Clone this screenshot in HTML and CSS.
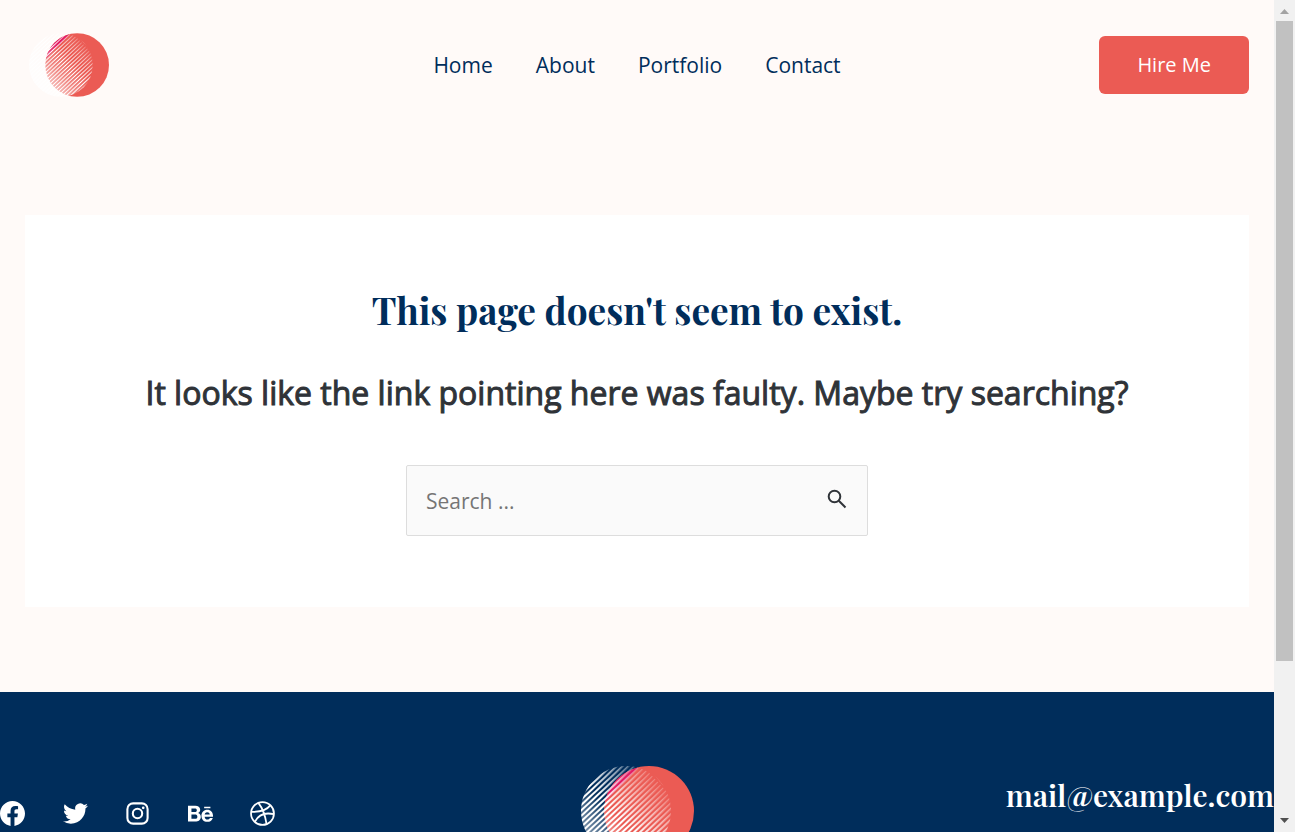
FILE: index.html
```html
<!DOCTYPE html>
<html lang="en">
<head>
<meta charset="utf-8">
<meta name="viewport" content="width=device-width, initial-scale=1">
<title>Page not found</title>
<link rel="stylesheet" href="styles.css">
</head>
<body class="window">
<svg class="defs" aria-hidden="true">
  <defs>
    <pattern id="stripes" width="90" height="4" patternUnits="userSpaceOnUse" patternTransform="rotate(-43 45 45)">
      <path d="M0 .5 L20 .7 L88 1.800 V2.100 L20 3.200 L0 3.500Z" fill="#fff"/>
    </pattern>
  </defs>
  <symbol id="logo" viewBox="0 0 113 90">
    <circle cx="68" cy="45" r="45" fill="#eb5b54"/>
    <path d="M57 1.500 A45 45 0 0 0 24 36 L32 27 L47 12Z" fill="#e31c63"/>
    <circle cx="45" cy="45" r="45" fill="url(#stripes)"/>
  </symbol>
</svg>
<div class="page">
  <header class="header">
    <a class="brand" href="#" aria-label="Home page"><svg class="brand-logo" aria-hidden="true"><use href="#logo"/></svg></a>
    <nav class="nav">
      <a href="#">Home</a>
      <a href="#">About</a>
      <a href="#">Portfolio</a>
      <a href="#">Contact</a>
    </nav>
    <button class="hire" type="button">Hire Me</button>
  </header>
  <main class="main">
    <section class="card">
      <h1 class="title">This page doesn't seem to exist.</h1>
      <p class="subtitle">It looks like the link pointing here was faulty. Maybe try searching?</p>
      <form class="search">
        <input class="search-input" type="search" aria-label="Search" placeholder="Search ...">
        <button class="search-button" type="button" aria-label="Submit search">
          <svg viewBox="0 0 20 20" aria-hidden="true"><circle cx="7.5" cy="7.5" r="5.8"/><path d="M11.8 11.8 L18.5 18.5"/></svg>
        </button>
      </form>
    </section>
  </main>
  <footer class="footer">
    <div class="social">
      <a href="#" aria-label="Facebook"><svg viewBox="0 0 24 24"><path d="M24 12.073C24 5.446 18.627.073 12 .073S0 5.446 0 12.073c0 5.99 4.388 10.954 10.125 11.854v-8.385H7.078v-3.47h3.047V9.43c0-3.007 1.792-4.669 4.533-4.669 1.312 0 2.686.235 2.686.235v2.953H15.83c-1.491 0-1.956.925-1.956 1.874v2.25h3.328l-.532 3.47h-2.796v8.385C19.612 23.027 24 18.062 24 12.073z"/></svg></a>
      <a href="#" aria-label="Twitter"><svg viewBox="0 0 24 24"><path d="M23.953 4.57a10 10 0 0 1-2.825.775 4.958 4.958 0 0 0 2.163-2.723c-.951.555-2.005.959-3.127 1.184a4.92 4.92 0 0 0-8.384 4.482C7.69 8.095 4.067 6.13 1.64 3.162a4.822 4.822 0 0 0-.666 2.475c0 1.71.87 3.213 2.188 4.096a4.904 4.904 0 0 1-2.228-.616v.06a4.923 4.923 0 0 0 3.946 4.827 4.996 4.996 0 0 1-2.212.085 4.936 4.936 0 0 0 4.604 3.417 9.867 9.867 0 0 1-6.102 2.105c-.39 0-.779-.023-1.17-.067a13.995 13.995 0 0 0 7.557 2.209c9.053 0 13.998-7.496 13.998-13.985 0-.21 0-.42-.015-.63A9.935 9.935 0 0 0 24 4.59z"/></svg></a>
      <a href="#" aria-label="Instagram"><svg viewBox="0 0 24 24"><g fill="none" stroke="#fff" stroke-width="2"><rect x="2.3" y="2.3" width="19.4" height="19.4" rx="5.5"/><circle cx="12" cy="12" r="4.5"/></g><circle cx="17.5" cy="6.5" r="1.3"/></svg></a>
      <a href="#" aria-label="Behance"><svg viewBox="0 0 24 24"><path fill-rule="evenodd" d="M0 4.500h7c2.700 0 4.700 1.100 4.700 3.900 0 1.600-.8 2.600-2.100 3.200 1.800.5 2.700 2 2.700 3.800 0 3-2.500 4.300-5.200 4.300H0zM3.300 7.100v3.500h3.200c1.100 0 2-.5 2-1.800 0-1.400-1-1.700-2.200-1.700zM3.300 12.900V17.100h3.400c1.300 0 2.300-.5 2.300-2.100s-1-2.100-2.300-2.100zM15.500 5.400h6v1.500h-6zM18.500 8.300c3.800 0 5.700 3 5.500 6.700h-8c.1 1.800 1 2.700 2.700 2.700 1.200 0 2.100-.7 2.400-1.500h2.700c-.8 2.600-2.600 3.800-5.200 3.800-3.500 0-5.700-2.400-5.700-5.900 0-3.300 2.400-5.800 5.600-5.800zM16 13h4.900c-.3-1.500-.9-2.300-2.400-2.300-1.900 0-2.500 1.500-2.500 2.300z"/></svg></a>
      <a href="#" aria-label="Dribbble"><svg viewBox="0 0 24 24"><g fill="none" stroke="#fff" stroke-width="1.7"><circle cx="12" cy="12" r="11"/><path d="M1.200 10.500C9 10.600 15.800 9 19.500 4.200M8 1.800c3.600 4.500 6.500 11.200 7.900 20.300M4.600 20c3.400-6.600 9.900-9.300 18.300-7.300"/></g></svg></a>
    </div>
    <svg class="footer-logo" role="img" aria-label="Logo"><use href="#logo"/></svg>
    <a class="mail" href="mailto:mail@example.com">mail@example.com</a>
  </footer>
</div>
<div class="scrollbar" aria-hidden="true">
  <svg viewBox="0 0 21 21"><path d="M6 14 L10.500 9 L15 14Z" fill="#a3a3a3"/></svg>
  <div class="track"><div class="thumb"></div></div>
  <svg viewBox="0 0 21 21"><path d="M6 7 L10.500 12 L15 7Z" fill="#505050"/></svg>
</div>
</body>
</html>
```
FILE: styles.css
```css
* { box-sizing: border-box; }

.window {
  margin: 0;
  height: 100vh;
  overflow: hidden;
  display: grid;
  grid-template-columns: minmax(0, 1fr) 21px;
  grid-template-rows: 100vh;
  font-family: "Open Sans", sans-serif;
  font-size: 21px;
  color: #2f3338;
  background: #fffaf8;
}

.defs { position: absolute; width: 0; height: 0; }
a { text-decoration: none; color: inherit; }

.page { overflow: hidden; display: flex; flex-direction: column; }
.page > * { flex-shrink: 0; }

.header {
  display: grid;
  grid-template-columns: 1fr auto 1fr;
  align-items: center;
  padding: 33px 25px 32px;
}
.brand { padding-left: 4px; line-height: 0; }
.brand-logo { width: 80px; height: 64px; }
.nav { display: flex; gap: 43px; color: #002d5b; line-height: 32px; font-weight: 400; }
.hire {
  justify-self: end;
  padding: 14px 38px;
  border: 0;
  border-radius: 6px;
  background: #eb5b54;
  color: #fff;
  font: 400 20px/30px "Open Sans", sans-serif;
}

.main { padding: 86px 25px 85px; }
.card {
  display: flex;
  flex-direction: column;
  align-items: center;
  padding: 70px 25px 71px;
  background: #fff;
  text-align: center;
}
.title {
  margin: 0;
  font: 700 37px/50px "Playfair Display", "Liberation Serif", serif;
  color: #002d5b;
}
.subtitle {
  margin: 33px 0 47px;
  font-size: 32px;
  line-height: 50px;
  -webkit-text-stroke: 1px currentColor;
}
.search {
  display: flex;
  width: 462px;
  max-width: 100%;
  height: 71px;
  border: 1px solid #dddddd;
  border-radius: 2px;
  background: #fafafa;
}
.search-input {
  flex: 1;
  min-width: 0;
  padding: 0 19px;
  border: 0;
  background: none;
  font: 400 21px/32px "Open Sans", sans-serif;
  color: #666;
}
.search-input::placeholder { color: #757575; }
.search-button { width: 60px; padding: 0 20px 4px; border: 0; background: none; }
.search-button svg {
  display: block;
  width: 20px;
  height: 20px;
  fill: none;
  stroke: #2f3338;
  stroke-width: 2;
}

.footer {
  display: grid;
  grid-template-columns: 1fr auto 1fr;
  align-items: start;
  padding: 74px 0;
  background: #002d5b;
  color: #fff;
}
.social {
  display: flex;
  justify-content: space-between;
  width: 275px;
  padding-top: 35px;
}
.social svg { display: block; width: 25px; height: 25px; fill: #fff; }
.footer-logo { width: 113px; height: 90px; }
.mail {
  justify-self: end;
  padding-top: 9px;
  font: 600 30px/40px "Playfair Display", "Liberation Serif", serif;
}

.scrollbar { display: flex; flex-direction: column; background: #f1f1f1; }
.scrollbar svg { width: 21px; height: 21px; }
.track { flex: 1; padding: 0 2px; }
.thumb { height: 81%; background: #c1c1c1; }
```
